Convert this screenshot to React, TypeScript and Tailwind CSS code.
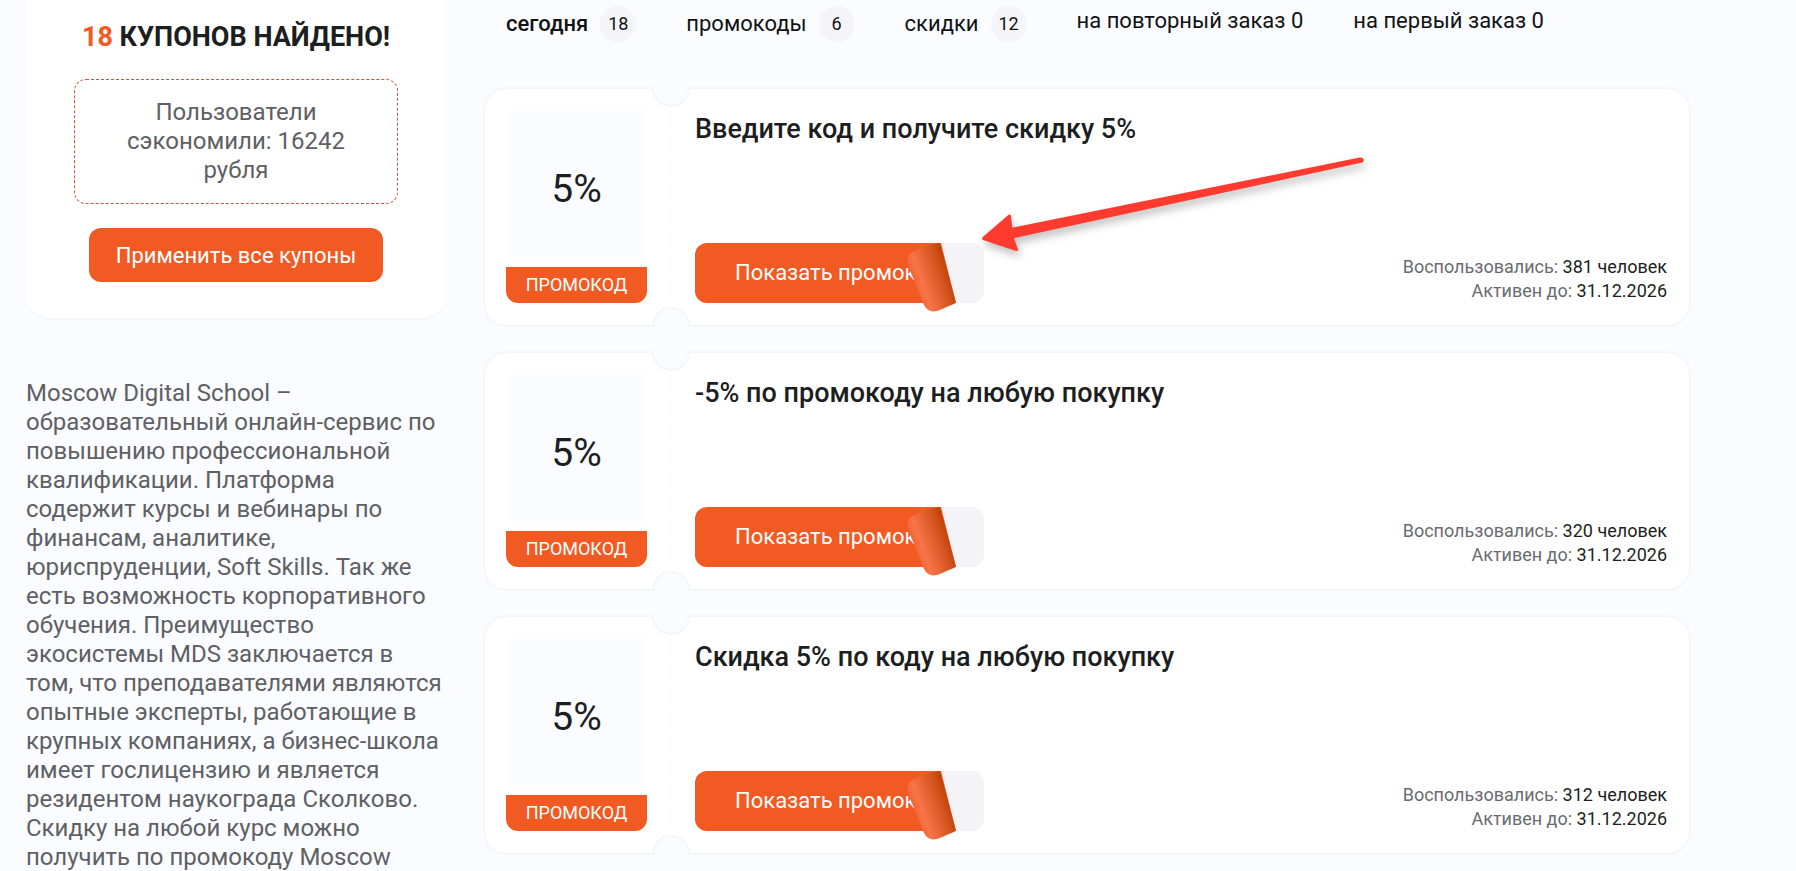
interface Coupon {
  id: number;
  title: string;
  discount: string;
  used: number;
  until: string;
  pointed?: boolean;
}

interface Filter {
  label: string;
  count: number;
  badge: boolean;
}

const filters: Filter[] = [
  { label: "сегодня", count: 18, badge: true },
  { label: "промокоды", count: 6, badge: true },
  { label: "скидки", count: 12, badge: true },
  { label: "на повторный заказ", count: 0, badge: false },
  { label: "на первый заказ", count: 0, badge: false },
];

const coupons: Coupon[] = [
  { id: 1, title: "Введите код и получите скидку 5%", discount: "5%", used: 381, until: "31.12.2026", pointed: true },
  { id: 2, title: "-5% по промокоду на любую покупку", discount: "5%", used: 320, until: "31.12.2026" },
  { id: 3, title: "Скидка 5% по коду на любую покупку", discount: "5%", used: 312, until: "31.12.2026" },
];

const Arrow = () => (
  <svg
    className="pointer-events-none absolute -top-[94px] left-[275px] z-10 drop-shadow-[2px_5px_4px_rgba(0,0,0,0.25)]"
    width="410"
    height="120"
    viewBox="0 0 410 120"
    fill="#ff3b30"
    aria-hidden="true"
  >
    <path
      d="M13.5 89.5 L39.5 67 L41 80.5 L390 10 Q393 10 392 12 L42 88 L46.5 100.5 Z"
      stroke="#ff3b30"
      strokeWidth="3"
      strokeLinejoin="round"
    />
  </svg>
);

const ShowButton = ({ id }: { id: number }) => (
  <button type="button" className="relative block h-[60px] w-[289px] cursor-pointer rounded-xl bg-[#f3f3f8] text-left">
    <svg className="absolute top-0 left-0" width="289" height="72" viewBox="0 0 289 72" aria-hidden="true">
      <path d="M12 0 H246 L261 60 H12 A12 12 0 0 1 0 48 V12 A12 12 0 0 1 12 0 Z" fill="#f15a22" />
    </svg>
    <span className="relative block pl-10 text-[22px] leading-7 whitespace-nowrap text-white">Показать промокод</span>
    <svg className="absolute top-0 left-0" width="289" height="72" viewBox="0 0 289 72" aria-hidden="true">
      <defs>
        <linearGradient id={`curl-${id}`} gradientUnits="userSpaceOnUse" x1="216" y1="42" x2="254" y2="29">
          <stop offset="0" stopColor="#e9602f" />
          <stop offset="0.28" stopColor="#f87449" />
          <stop offset="0.65" stopColor="#dd5c2a" />
          <stop offset="1" stopColor="#c44208" />
        </linearGradient>
      </defs>
      <path
        d="M245 0 L261 60 L245 67 Q233 72 228 60 L213 22 Q210 12 219 8 C228 3 237 1 245 0 Z"
        fill={`url(#curl-${id})`}
      />
    </svg>
  </button>
);

const CouponCard = ({ id, title, discount, used, until, pointed }: Coupon) => (
  <article className="flex h-60 rounded-3xl border-2 border-[#f5f6fa] bg-white pr-[22px] pl-[21px]">
    <div className="my-[22px] flex w-[141px] shrink-0 flex-col text-[#1c1e20]">
      <div className="mx-px mb-2.5 flex flex-1 items-center justify-center border-x-4 border-[#fdfdff] bg-[#fafcff] pt-2.5 text-[39px]">
        {discount}
      </div>
      <div className="flex h-9 items-center justify-center rounded-b-xl bg-[#f15a22] text-lg text-white">ПРОМОКОД</div>
    </div>

    <div className="relative mr-6 ml-[23px] w-px shrink-0">
      <div className="absolute -top-0.5 left-1/2 h-5 w-[38px] -translate-x-1/2 rounded-b-full border-2 border-t-0 border-[#f5f6fa] bg-[#fafcff]" />
      <div className="mt-[22px] h-[192px] bg-[repeating-linear-gradient(to_bottom,#f3f5fa_0_17px,transparent_17px_24px)]" />
      <div className="absolute -bottom-0.5 left-1/2 h-5 w-[38px] -translate-x-1/2 rounded-t-full border-2 border-b-0 border-[#f5f6fa] bg-[#fafcff]" />
    </div>

    <div className="flex min-w-0 flex-1 flex-col justify-between py-[22px]">
      <h2 className="text-[27px] leading-9 font-medium text-[#1c1e20]">{title}</h2>
      <div className="flex items-end justify-between">
        <div className="relative">
          <ShowButton id={id} />
          {pointed && <Arrow />}
        </div>
        <div className="text-right text-lg leading-6 text-[#6a6b70]">
          <p>Воспользовались: <span className="text-[#1c1e20]">{used} человек</span></p>
          <p>Активен до: <span className="text-[#1c1e20]">{until}</span></p>
        </div>
      </div>
    </div>
  </article>
);

const Sidebar = () => (
  <aside className="w-[420px] shrink-0">
    <section className="flex flex-col items-center rounded-b-3xl border-b-2 border-[#f5f6fa] bg-white pt-[19px] pb-9">
      <h1 className="text-[27px] leading-9 font-bold text-[#1c1e20]">
        <span className="text-[#f15a22]">18</span> КУПОНОВ НАЙДЕНО!
      </h1>
      <p className="mt-6 w-[324px] rounded-xl border border-dashed border-[#c4573a] px-10 py-[18px] text-center text-2xl leading-[29px] text-[#5f6064]">
        Пользователи сэкономили: 16242 рубля
      </p>
      <button type="button" className="mt-6 h-[54px] w-[294px] cursor-pointer rounded-xl bg-[#f15a22] text-[22px] text-white">
        Применить все купоны
      </button>
    </section>
    <p className="mt-[59px] text-2xl leading-[29px] text-[#5f6064]">
      Moscow Digital School – образовательный онлайн-сервис по повышению профессиональной
      квалификации. Платформа содержит курсы и вебинары по финансам, аналитике, юриспруденции,
      Soft Skills. Так же есть возможность корпоративного обучения. Преимущество экосистемы MDS
      заключается в том, что преподавателями являются опытные эксперты, работающие в крупных
      компаниях, а бизнес-школа имеет гослицензию и является резидентом наукограда Сколково.
      Скидку на любой курс можно получить по промокоду Moscow
    </p>
  </aside>
);

export default function App() {
  return (
    <div className="flex min-h-screen gap-[37px] bg-[#fafcff] pr-[105px] pl-[26px] font-[Roboto,sans-serif]">
      <Sidebar />
      <main className="min-w-0 flex-1">
        <nav className="flex h-[87px] items-start gap-[50px] pt-1.5 pl-[23px] text-[22px] leading-[30px] text-[#111214]">
          {filters.map((filter, index) => (
            <a key={filter.label} href="#" className="flex items-center whitespace-nowrap">
              <span className={index === 0 ? "font-medium" : ""}>{filter.label}</span>
              {filter.badge ? (
                <span className="ml-3 flex size-9 items-center justify-center rounded-full bg-[#f4f4f9] text-lg">{filter.count}</span>
              ) : (
                <span>&nbsp;{filter.count}</span>
              )}
            </a>
          ))}
        </nav>
        <div className="flex flex-col gap-6">
          {coupons.map((coupon) => (
            <CouponCard key={coupon.id} {...coupon} />
          ))}
        </div>
      </main>
    </div>
  );
}
